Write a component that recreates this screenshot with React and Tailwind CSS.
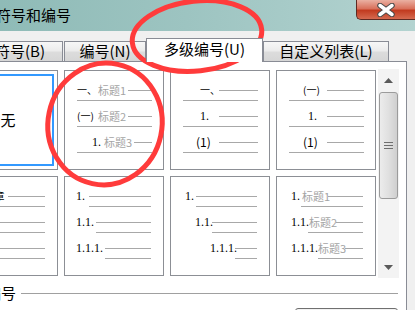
const cjk = "font-['Noto_Sans_CJK_SC',sans-serif]";
const serif = "font-['Liberation_Serif','Noto_Sans_CJK_SC',serif]";
const cjkNum = `${cjk} text-[10px]`;
const parenNum = `${cjk} text-[12px]`;
const serifNum = `${serif} text-[12px]`;

// each row: pl = number start, nw = number width, tw = title width, ul = underline start
const styles = [
  { kind: 'none' },
  {
    pr: 'pr-[11px]',
    rows: [
      { n: '一、', f: cjkNum, pl: 'pl-[12px]', nw: 'w-[21px]', t: '标题1', tw: 'w-[30px]', ul: 'ml-[12px]' },
      { n: '(一)', f: cjkNum, pl: 'pl-[12px]', nw: 'w-[21px]', t: '标题2', tw: 'w-[30px]', ul: 'ml-[12px]' },
      { n: '1.', f: serifNum, pl: 'pl-[27px]', nw: 'w-[12px]', t: '标题3', tw: 'w-[30px]', ul: 'ml-[12px]' },
    ],
  },
  {
    pr: 'pr-[11px]',
    rows: [
      { n: '一、', f: cjkNum, pl: 'pl-[29px]', nw: 'w-[19px]', ul: 'ml-[12px]' },
      { n: '1.', f: serifNum, pl: 'pl-[29px]', nw: 'w-[19px]', ul: 'ml-[12px]' },
      { n: '(1)', f: parenNum, pl: 'pl-[25px]', nw: 'w-[23px]', ul: 'ml-[12px]' },
    ],
  },
  {
    pr: 'pr-[11px]',
    rows: [
      { n: '(一)', f: cjkNum, pl: 'pl-[26px]', nw: 'w-[24px]', ul: 'ml-[12px]' },
      { n: '1.', f: serifNum, pl: 'pl-[31px]', nw: 'w-[19px]', ul: 'ml-[12px]' },
      { n: '(1)', f: parenNum, pl: 'pl-[26px]', nw: 'w-[24px]', ul: 'ml-[12px]' },
    ],
  },
  {
    pr: 'pr-[12px]',
    rows: [
      { n: '第1章', f: cjkNum, pl: 'pl-[20px]', nw: 'w-[29px]', ul: 'ml-[12px]' },
      { n: '1.1', f: serifNum, pl: 'pl-[12px]', nw: 'w-[27px]', ul: 'ml-[12px]' },
      { n: '1.1.1', f: serifNum, pl: 'pl-[12px]', nw: 'w-[27px]', ul: 'ml-[12px]' },
    ],
  },
  {
    pr: 'pr-[12px]',
    rows: [
      { n: '1.', f: serifNum, pl: 'pl-[11px]', nw: 'w-[13px]', ul: 'ml-[24px]' },
      { n: '1.1.', f: serifNum, pl: 'pl-[11px]', nw: 'w-[20px]', ul: 'ml-[31px]' },
      { n: '1.1.1.', f: serifNum, pl: 'pl-[11px]', nw: 'w-[29px]', ul: 'ml-[40px]' },
    ],
  },
  {
    pr: 'pr-[12px]',
    rows: [
      { n: '1.', f: serifNum, pl: 'pl-[14px]', nw: 'w-[11px]', ul: 'ml-[25px]' },
      { n: '1.1.', f: serifNum, pl: 'pl-[24px]', nw: 'w-[17px]', ul: 'ml-[41px]' },
      { n: '1.1.1.', f: serifNum, pl: 'pl-[39px]', nw: 'w-[25px]', ul: 'ml-[64px]' },
    ],
  },
  {
    pr: 'pr-[12px]',
    rows: [
      { n: '1.', f: serifNum, pl: 'pl-[14px]', nw: 'w-[11px]', t: '标题1', tw: 'w-[26px]', ul: 'ml-[24px]' },
      { n: '1.1.', f: serifNum, pl: 'pl-[14px]', nw: 'w-[18px]', t: '标题2', tw: 'w-[27px]', ul: 'ml-[31px]' },
      { n: '1.1.1.', f: serifNum, pl: 'pl-[14px]', nw: 'w-[27px]', t: '标题3', tw: 'w-[27px]', ul: 'ml-[41px]' },
    ],
  },
];

function StyleCell({ s }) {
  if (s.kind === 'none') {
    return (
      <div className="border border-[#8c8f95] bg-white p-[3px]">
        <div className="flex h-full items-center justify-center border-2 border-[#3399ff] text-[15px] text-black">
          无
        </div>
      </div>
    );
  }
  return (
    <div className={`flex flex-col border border-[#8c8f95] bg-white pt-[12px] ${s.pr}`}>
      {s.rows.map((r, i) => (
        <div key={i} className={i > 0 ? 'mt-[8px]' : ''}>
          <div className={`flex h-[14px] items-center ${r.pl}`}>
            <span className={`${r.nw} shrink-0 whitespace-nowrap leading-[14px] text-black ${r.f}`}>{r.n}</span>
            {r.t && (
              <span className={`${r.tw} shrink-0 whitespace-nowrap text-[11px] leading-[14px] text-[#a4a4a4] ${cjk}`}>{r.t}</span>
            )}
            <div className="h-px flex-1 bg-[#a8a8a8]" />
          </div>
          <div className={`mt-[3px] h-px bg-[#a8a8a8] ${r.ul}`} />
        </div>
      ))}
    </div>
  );
}

function Tab({ label, active, className }) {
  if (active) {
    return (
      <div className={`relative z-10 -mb-px flex h-[24px] items-center justify-center border border-b-0 border-[#898c95] bg-white pb-[2px] text-[15px] text-black ${className}`}>
        {label}
      </div>
    );
  }
  return (
    <div className={`flex h-[20px] items-center justify-center overflow-hidden whitespace-nowrap border border-b-0 border-[#898c95] bg-[linear-gradient(to_bottom,#f7f7f7,#ececec_45%,#dcdcdc_55%,#d6d6d6)] text-[15px] text-black ${className}`}>
      {label}
    </div>
  );
}

function ScrollBar() {
  return (
    <div className="ml-[2px] -mt-px flex h-[209px] w-[21px] flex-col bg-[#f3f3f3]">
      <div className="flex h-[22px] items-center justify-center">
        <svg width="9" height="5" viewBox="0 0 9 5"><path d="M0 5 L4.5 0 L9 5 Z" fill="#5a5a5a" /></svg>
      </div>
      <div className="mx-px mt-px flex h-[107px] items-center justify-center rounded-[3px] border border-[#9b9b9b] bg-[linear-gradient(to_right,#ececec,#e0e0e0_50%,#cfcfcf)]">
        <div className="flex flex-col gap-[2px]">
          <div className="h-px w-[9px] bg-[#6e6e6e]" />
          <div className="h-px w-[9px] bg-[#6e6e6e]" />
          <div className="h-px w-[9px] bg-[#6e6e6e]" />
        </div>
      </div>
      <div className="flex-1" />
      <div className="flex h-[22px] items-center justify-center">
        <svg width="9" height="5" viewBox="0 0 9 5"><path d="M0 0 L4.5 5 L9 0 Z" fill="#5a5a5a" /></svg>
      </div>
    </div>
  );
}

export default function App() {
  return (
    <div className={`relative h-[310px] w-[415px] overflow-hidden bg-[#f0f0f0] ${cjk}`}>
      {/* title bar */}
      <div className="flex h-[31px] items-start justify-between bg-[linear-gradient(to_right,#8fbbb7,#9dc4c1_45%,#b3d3d0)]">
        <span className="-ml-[4px] mt-[7px] text-[15px] leading-[16px] text-black">符号和编号</span>
        <div className="flex h-[20px] w-[59px] items-center justify-center rounded-bl-[5px] border border-t-0 border-r-0 border-[#5e2a22] bg-[linear-gradient(to_bottom,#eab0a2,#d9715c_45%,#c23b20_55%,#d56a50)]">
          <svg width="22" height="14" viewBox="0 0 22 14">
            <path d="M5 2.5 L17 11.5 M17 2.5 L5 11.5" stroke="#4a4a4a" strokeWidth="5.5" strokeLinecap="round" />
            <path d="M5 2.5 L17 11.5 M17 2.5 L5 11.5" stroke="#ffffff" strokeWidth="3.5" strokeLinecap="round" />
          </svg>
        </div>
      </div>

      {/* tabs */}
      <div className="-ml-[23px] flex h-[30px] items-end">
        <Tab label="符号(B)" className="w-[86px]" />
        <Tab label="编号(N)" className="ml-px w-[82px]" />
        <Tab label="多级编号(U)" active className="w-[117px]" />
        <Tab label="自定义列表(L)" className="w-[126px]" />
      </div>

      {/* tab panel */}
      <div className="-ml-[50px] w-[457px] border border-[#898c95] bg-white pl-[7px] pr-[7px] pt-[8px]">
        <div className="flex">
          <div className="grid grid-cols-[repeat(4,100px)] grid-rows-[repeat(2,100px)] gap-[6px]">
            {styles.map((s, i) => (
              <StyleCell key={i} s={s} />
            ))}
          </div>
          <ScrollBar />
        </div>

        <div className="mt-[7px] flex h-[16px] items-center pr-px">
          <span className="-ml-[2px] text-[15px] leading-[16px] text-black">列表编号</span>
          <div className="ml-[5px] h-px flex-1 bg-[#a0a0a0]" />
        </div>

        <div className="mt-[7px] flex justify-end pr-px">
          <div className="h-[24px] w-[103px] rounded-[3px] border border-[#707070] bg-[linear-gradient(to_bottom,#f2f2f2,#ebebeb_50%,#dddddd)]" />
        </div>
      </div>

      {/* red annotation marks */}
      <svg className="pointer-events-none absolute left-0 top-0" width="415" height="310">
        <ellipse cx="197" cy="36" rx="65" ry="35" transform="rotate(-6 197 36)" fill="none" stroke="#ff3b3b" strokeWidth="5" />
        <ellipse cx="105" cy="124" rx="57" ry="61" transform="rotate(12 105 124)" fill="none" stroke="#ff3b3b" strokeWidth="5" />
      </svg>
    </div>
  );
}
